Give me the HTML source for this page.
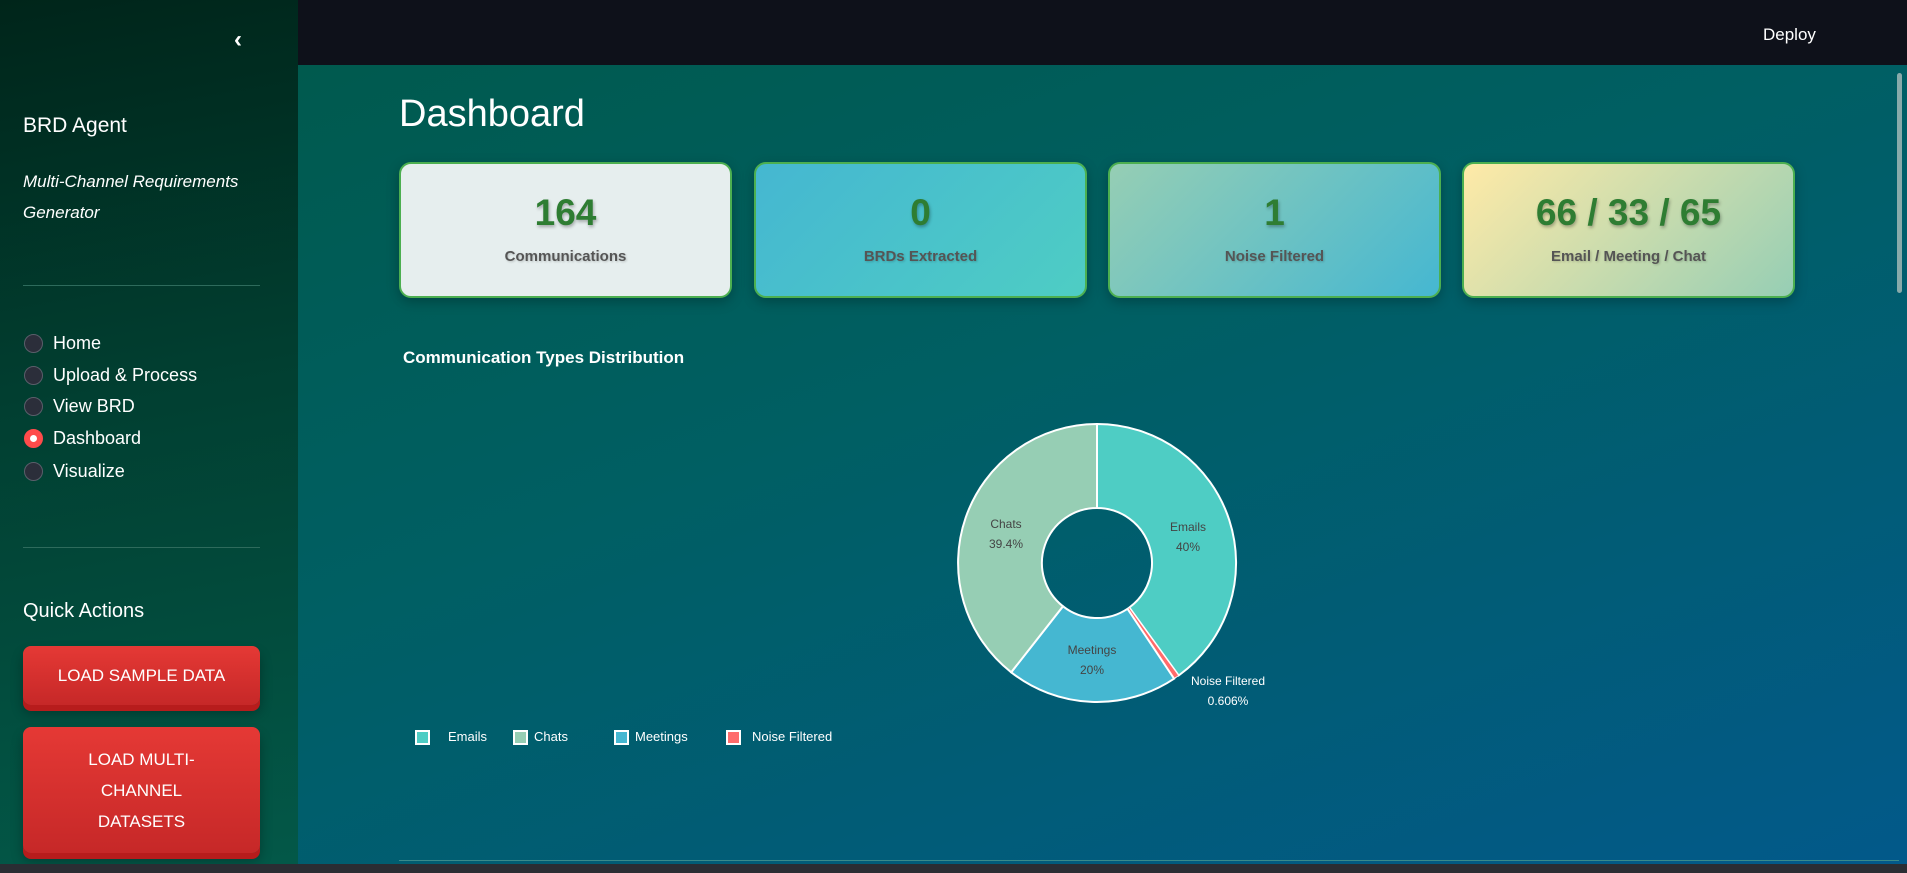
<!DOCTYPE html>
<html><head><meta charset="utf-8"><style>
*{margin:0;padding:0;box-sizing:border-box}
body{width:1907px;height:873px;overflow:hidden;font-family:"Liberation Sans",sans-serif;background:#0e111a;position:relative}
#side{position:absolute;left:0;top:0;width:298px;height:864px;background:linear-gradient(170deg,#00251a 0%,#013f31 45%,#035848 100%);color:#fff}
#top{position:absolute;left:298px;top:0;right:0;height:65px;background:#0e111a}
#main{position:absolute;left:298px;top:65px;right:0;height:799px;background:linear-gradient(160deg,#005a4e 0%,#005f63 40%,#02598a 100%)}
.abs{position:absolute}
.card{position:absolute;top:97px;width:333px;height:136px;border:2px solid #4caf50;border-radius:12px;box-shadow:0 4px 12px rgba(0,0,0,.25);text-align:center}
.num{position:absolute;left:0;right:0;top:28px;font-size:37px;font-weight:bold;color:#2e7d32;text-shadow:1px 2px 3px rgba(0,0,0,.3)}
.lab{position:absolute;left:0;right:0;top:84px;font-size:15px;font-weight:bold;color:#555;text-shadow:1px 1px 2px rgba(0,0,0,.2)}
.radio{position:absolute;left:24px;width:19px;height:19px;border-radius:50%;background:#2b2e3a;border:1px solid #5a5e6a}
.rl{position:absolute;left:53px;font-size:18px}
.btn{position:absolute;left:23px;width:237px;background:linear-gradient(#e53935,#c62828);border-radius:8px;box-shadow:0 6px 0 #b71c1c,0 8px 12px rgba(0,0,0,.3);color:#fff;font-size:17px;text-align:center}
.leg{position:absolute;top:665px;width:15px;height:15px;border:2px solid #fff}
.lt{position:absolute;top:664px;font-size:13px;color:#fff}
</style></head><body>
<div id="side">
<div class="abs" style="left:234px;top:26px;font-size:24px;font-weight:bold">&#8249;</div>
<div class="abs" style="left:23px;top:114px;font-size:21px">BRD Agent</div>
<div class="abs" style="left:23px;top:166px;font-size:17px;font-style:italic;line-height:31px">Multi-Channel Requirements<br>Generator</div>
<div class="abs" style="left:23px;top:285px;width:237px;height:1px;background:#2e6b5c"></div>
<div class="radio" style="top:334px"></div><div class="rl" style="top:333px">Home</div>
<div class="radio" style="top:366px"></div><div class="rl" style="top:365px">Upload &amp; Process</div>
<div class="radio" style="top:397px"></div><div class="rl" style="top:396px">View BRD</div>
<div class="radio" style="top:429px;background:#ff4b4b;border-color:#ff4b4b"><div style="position:absolute;left:5px;top:5px;width:7px;height:7px;border-radius:50%;background:#fff"></div></div><div class="rl" style="top:428px">Dashboard</div>
<div class="radio" style="top:462px"></div><div class="rl" style="top:461px">Visualize</div>
<div class="abs" style="left:23px;top:547px;width:237px;height:1px;background:#2e6b5c"></div>
<div class="abs" style="left:23px;top:600px;font-size:20px">Quick Actions</div>
<div class="btn" style="top:646px;height:59px;line-height:59px">LOAD SAMPLE DATA</div>
<div class="btn" style="top:727px;height:126px;padding-top:17px;line-height:31px">LOAD MULTI-<br>CHANNEL<br>DATASETS</div>
</div>
<div id="top"><div class="abs" style="left:1465px;top:25px;color:#fff;font-size:17px">Deploy</div></div>
<div id="main">
<div class="abs" style="left:101px;top:28px;font-size:38px;color:#fff">Dashboard</div>
<div class="card" style="left:101px;background:#e6eeee"><div class="num">164</div><div class="lab">Communications</div></div>
<div class="card" style="left:456px;background:linear-gradient(135deg,#45b7d1,#4ecdc4)"><div class="num">0</div><div class="lab">BRDs Extracted</div></div>
<div class="card" style="left:810px;background:linear-gradient(135deg,#96ceb4,#45b7d1)"><div class="num">1</div><div class="lab">Noise Filtered</div></div>
<div class="card" style="left:1164px;background:linear-gradient(135deg,#ffeaa7,#96ceb4)"><div class="num">66 / 33 / 65</div><div class="lab">Email / Meeting / Chat</div></div>
<div class="abs" style="left:105px;top:283px;font-size:17px;font-weight:bold;color:#fff">Communication Types Distribution</div>
<svg class="abs" style="left:0;top:0" width="1609" height="799">
<g transform="translate(799,498)" stroke="#fff" stroke-width="2">
<path d="M0,-139 A139,139 0 0 1 81.7,112.5 L32.3,44.5 A55,55 0 0 0 0,-55Z" fill="#4ecdc4"/>
<path d="M81.7,112.5 A139,139 0 0 1 77.1,115.7 L30.5,45.8 A55,55 0 0 0 32.3,44.5Z" fill="#ff6b6b" stroke-width="1"/>
<path d="M77.1,115.7 A139,139 0 0 1 -85.8,109.3 L-34,43.3 A55,55 0 0 0 30.5,45.8Z" fill="#45b7d1"/>
<path d="M-85.8,109.3 A139,139 0 0 1 0,-139 L0,-55 A55,55 0 0 0 -34,43.3Z" fill="#96ceb4"/>
</g>
<g font-family="Liberation Sans" font-size="12" text-anchor="middle" fill="#444">
<text x="890" y="466">Emails</text><text x="890" y="486">40%</text>
<text x="708" y="463">Chats</text><text x="708" y="483">39.4%</text>
<text x="794" y="589">Meetings</text><text x="794" y="609">20%</text>
<text x="930" y="620" fill="#fff">Noise Filtered</text><text x="930" y="640" fill="#fff">0.606%</text>
</g>
</svg>
<div class="leg" style="left:117px;background:#4ecdc4"></div><div class="lt" style="left:150px">Emails</div>
<div class="leg" style="left:215px;background:#96ceb4"></div><div class="lt" style="left:236px">Chats</div>
<div class="leg" style="left:316px;background:#45b7d1"></div><div class="lt" style="left:337px">Meetings</div>
<div class="leg" style="left:428px;background:#ff6b6b"></div><div class="lt" style="left:454px">Noise Filtered</div>
<div class="abs" style="left:101px;top:795px;width:1500px;height:1px;background:#3a8a8a"></div>
<div class="abs" style="left:1599px;top:8px;width:5px;height:220px;border-radius:3px;background:#8aa"></div>
</div>
<div class="abs" style="left:0;top:864px;width:1907px;height:9px;background:#2a2d33"></div>
</body></html>
